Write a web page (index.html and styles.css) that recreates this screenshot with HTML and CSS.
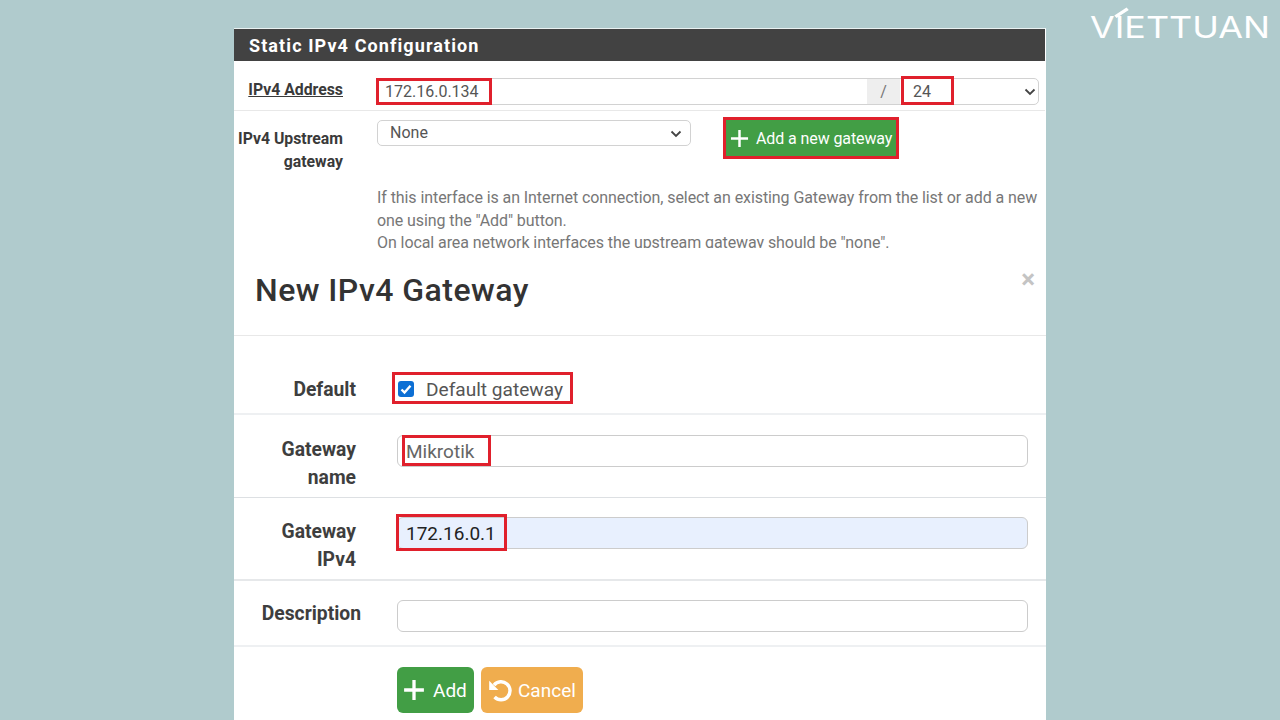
FILE: index.html
```html
<!DOCTYPE html>
<html lang="en">
<head>
<meta charset="utf-8">
<title>Static IPv4 Configuration</title>
<link rel="stylesheet" href="styles.css">
</head>
<body>
<div class="logo">V<span class="logo-i">I</span>ETTUAN</div>
<main class="stack">
  <section class="panel">
    <h2 class="panel-title">Static IPv4 Configuration</h2>
    <div class="cfg-row cfg-row-addr">
      <div class="cfg-label"><span class="under">IPv4 Address</span></div>
      <div class="group">
        <div class="group-input">172.16.0.134<span class="mark mark-ip"></span></div>
        <div class="group-addon">/</div>
        <div class="group-select">24<span class="mark mark-cidr"></span>
          <svg class="chev" viewBox="0 0 12 8"><path d="M1.500 1.500 6 6l4.500-4.500"/></svg>
        </div>
      </div>
    </div>
    <div class="cfg-row cfg-row-gw">
      <div class="cfg-label">IPv4 Upstream gateway</div>
      <div class="gw-body">
        <div class="gw-controls">
          <div class="gw-select">None
            <svg class="chev" viewBox="0 0 12 8"><path d="M1.500 1.500 6 6l4.500-4.500"/></svg>
          </div>
          <div class="btn-new">
            <svg class="plus" viewBox="0 0 20 20"><path d="M10 1v18M1 10h18"/></svg>
            <span>Add a new gateway</span>
            <span class="mark mark-new"></span>
          </div>
        </div>
        <p class="help">If this interface is an Internet connection, select an existing Gateway from the list or add a new one using the "Add" button.<br>On local area network interfaces the upstream gateway should be "none".</p>
      </div>
    </div>
  </section>
  <section class="modal">
    <header class="modal-head">
      <h1 class="modal-title">New IPv4 Gateway</h1>
      <span class="close">×</span>
    </header>
    <div class="form-row row-default">
      <div class="form-label">Default</div>
      <div class="form-field check-field">
        <span class="check"><svg viewBox="0 0 16 16"><path d="M3.500 8.500 6.500 11.500 12.500 4.800"/></svg></span>
        <span>Default gateway</span>
        <span class="mark mark-default"></span>
      </div>
    </div>
    <div class="form-row row-name">
      <div class="form-label">Gateway name</div>
      <div class="form-field"><div class="text-input muted">Mikrotik<span class="mark mark-name"></span></div></div>
    </div>
    <div class="form-row row-ip">
      <div class="form-label">Gateway IPv4</div>
      <div class="form-field"><div class="text-input filled">172.16.0.1<span class="mark mark-gw"></span></div></div>
    </div>
    <div class="form-row row-desc">
      <div class="form-label label-desc">Description</div>
      <div class="form-field"><div class="text-input"></div></div>
    </div>
    <div class="actions">
      <div class="btn btn-add"><svg class="plus plus-lg" viewBox="0 0 20 20"><path d="M10 1v18M1 10h18"/></svg>Add</div>
      <div class="btn btn-cancel"><svg class="undo" viewBox="0 0 24 24"><path d="M6.500 7.500A8.300 8.300 0 1 1 7 18.500"/><path class="undo-head" d="M2 3.500v8.500h8.500z"/></svg>Cancel</div>
    </div>
  </section>
</main>
</body>
</html>
```
FILE: styles.css
```css
* { box-sizing: border-box; }
html, body { margin: 0; height: 720px; overflow: hidden; }
body {
  position: relative;
  background: #b0cbcd;
  font-family: Roboto, "Liberation Sans", sans-serif;
  color: #555;
}
.logo {
  position: absolute;
  left: 1090px;
  top: 7px;
  font-family: Inter, "Liberation Sans", sans-serif;
  font-weight: 400;
  font-size: 30px;
  line-height: 40px;
  color: #fff;
  transform: scaleX(1.195);
  transform-origin: left center;
}
.logo-i { position: relative; }
.logo-i::before {
  content: "";
  position: absolute;
  left: 4px;
  top: -3px;
  width: 2.500px;
  height: 13px;
  background: #fff;
  transform: rotate(52deg);
}
.stack {
  width: 812px;
  margin-left: 234px;
  padding-top: 28px;
}
.panel {
  height: 220px;
  overflow: hidden;
  background: #fff;
  border-top: 1px solid #e9f1f1;
  border-right: 1px solid #fff;
}
.panel-title {
  margin: 0;
  height: 32px;
  padding-left: 15px;
  background: #424242;
  color: #fff;
  font-size: 18px;
  line-height: 33px;
  font-weight: 700;
  letter-spacing: 1.1px;
}
.cfg-row { display: flex; border-bottom: 1px solid #e8e8e8; }
.cfg-row-addr { height: 50px; padding-top: 17px; }
.cfg-row-gw { border-bottom: 0; padding-top: 9px; }
.cfg-label {
  width: 109px;
  margin-right: 34px;
  text-align: right;
  font-size: 15.8px;
  font-weight: 700;
  line-height: 23px;
  color: #3a3a3a;
  flex: none;
}
.cfg-row-gw .cfg-label { margin-top: 7px; }
.under { text-decoration: underline; }
.group {
  display: flex;
  width: 662px;
  height: 27px;
  border: 1px solid #d2d2d2;
  border-radius: 5px;
  font-size: 16px;
  line-height: 25px;
  color: #555;
}
.group-input { position: relative; width: 489px; padding-left: 7px; }
.group-addon { width: 33px; background: #eee; text-align: center; color: #777; }
.group-select { position: relative; flex: 1; padding-left: 13px; }
.chev {
  position: absolute;
  right: 2px;
  top: 9px;
  width: 12px;
  height: 8px;
  fill: none;
  stroke: #444;
  stroke-width: 1.800;
}
.gw-body { width: 662px; }
.gw-controls { display: flex; align-items: flex-start; gap: 34px; height: 49px; }
.gw-select {
  position: relative;
  width: 314px;
  height: 26px;
  padding-left: 12px;
  border: 1px solid #d2d2d2;
  border-radius: 5px;
  font-size: 16px;
  line-height: 24px;
  color: #555;
}
.gw-select .chev { right: 8px; }
.btn-new {
  position: relative;
  display: flex;
  align-items: center;
  gap: 7px;
  width: 172px;
  height: 37px;
  padding-left: 5px;
  background: #429e45;
  color: #fff;
  font-size: 16px;
  letter-spacing: -0.1px;
}
.plus {
  width: 19px;
  height: 19px;
  flex: none;
  fill: none;
  stroke: #fff;
  stroke-width: 2.600;
}
.help {
  margin: 0;
  padding-top: 18px;
  font-size: 16px;
  line-height: 22.5px;
  letter-spacing: -0.08px;
  color: #777;
}
.modal { background: #fff; height: 472px; }
.modal-head {
  position: relative;
  height: 88px;
  padding: 21px 0 0 21px;
  border-bottom: 1px solid #e8e8e8;
}
.modal-title {
  margin: 0;
  font-size: 32px;
  line-height: 42px;
  font-weight: 500;
  color: #333;
  letter-spacing: 0.45px;
}
.close {
  position: absolute;
  right: 11px;
  top: 16px;
  font-size: 26px;
  line-height: 30px;
  font-weight: 700;
  color: #c4c4c4;
}
.form-row { display: flex; border-bottom: 2px solid #eef0f2; }
.row-default { height: 79px; padding-top: 40px; }
.row-name { height: 83px; padding-top: 20px; border-bottom-width: 1px; border-bottom-color: #dde0e3; }
.row-ip { height: 83px; padding-top: 19px; border-bottom-color: #e6e8ea; }
.row-desc { height: 66px; padding-top: 19px; }
.form-label {
  width: 122px;
  padding-left: 22px;
  text-align: right;
  flex: none;
  font-size: 19.3px;
  font-weight: 700;
  line-height: 28px;
  color: #3e3e3e;
  margin-right: 41px;
}
.row-name .form-label, .row-ip .form-label { margin-top: 1px; }
.label-desc { width: 127px; padding-left: 0; margin-right: 36px; }
.form-field { position: relative; flex: none; width: 632px; }
.check-field {
  display: flex;
  align-items: center;
  height: 26px;
  gap: 12px;
  font-size: 19.1px;
  color: #555;
}
.check {
  display: block;
  width: 16px;
  height: 16px;
  margin-left: 1px;
  border-radius: 3px;
  background: #0d6fd4;
}
.check svg {
  display: block;
  width: 16px;
  height: 16px;
  fill: none;
  stroke: #fff;
  stroke-width: 2.400;
}
.text-input {
  position: relative;
  width: 631px;
  height: 32px;
  padding-left: 8px;
  border: 1px solid #ccc;
  border-radius: 6px;
  font-size: 19px;
  line-height: 31px;
  color: #444;
}
.muted { color: #666; }
.filled { background: #e8f0fe; color: #222; }
.actions { display: flex; gap: 7px; padding: 20px 0 0 163px; }
.btn {
  display: flex;
  align-items: center;
  height: 46px;
  border-radius: 6px;
  color: #fff;
  font-size: 19px;
}
.btn-add { width: 77px; background: #429e45; padding-left: 6px; gap: 8px; }
.btn-cancel { width: 102px; background: #f0ad4e; padding-left: 6px; gap: 5px; }
.plus-lg { width: 22px; height: 22px; stroke-width: 3; }
.undo { width: 26px; height: 26px; fill: none; stroke: #fff; stroke-width: 3.200; }
.undo-head { fill: #fff; stroke: none; }
.mark {
  position: absolute;
  border: 3px solid #e0202c;
  pointer-events: none;
}
.mark-ip { left: -2px; top: -1px; width: 116px; height: 27px; }
.mark-cidr { left: 1px; top: -3px; width: 53px; height: 29px; }
.mark-new { left: -2px; top: -3px; width: 176px; height: 42px; }
.mark-default { left: -5px; top: -4px; width: 181px; height: 32px; }
.mark-name { left: 4px; top: -1px; width: 89px; height: 31px; }
.mark-gw { left: -2px; top: -4px; width: 111px; height: 37px; }
```
